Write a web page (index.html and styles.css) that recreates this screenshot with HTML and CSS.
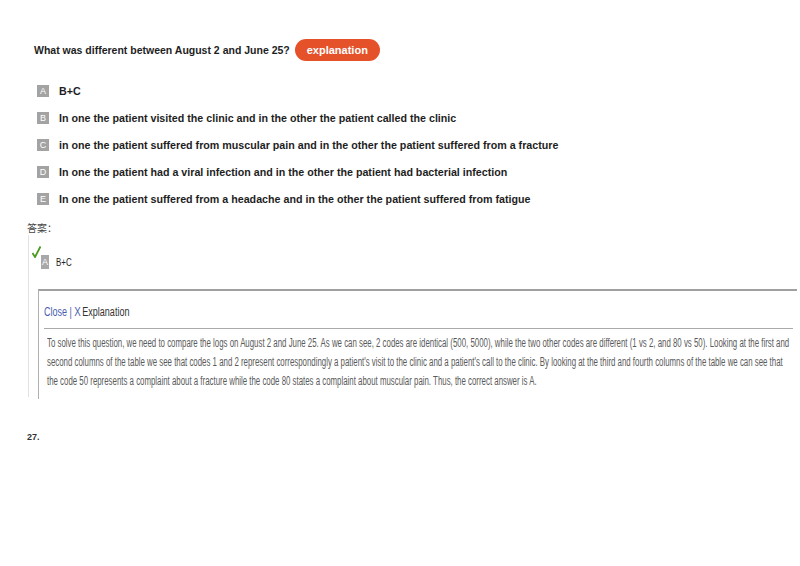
FILE: index.html
```html
<!doctype html>
<html>
<head>
<meta charset="utf-8">
<title>Question</title>
<link rel="stylesheet" href="styles.css">
</head>
<body>

<div class="question">
<span class="question-text">What was different between August 2 and June 25?</span>
<span class="explain-button">explanation</span>
</div>

<div class="options">
<div class="option"><span class="letter">A</span><span class="option-text">B+C</span></div>
<div class="option"><span class="letter">B</span><span class="option-text">In one the patient visited the clinic and in the other the patient called the clinic</span></div>
<div class="option"><span class="letter">C</span><span class="option-text">in one the patient suffered from muscular pain and in the other the patient suffered from a fracture</span></div>
<div class="option"><span class="letter">D</span><span class="option-text">In one the patient had a viral infection and in the other the patient had bacterial infection</span></div>
<div class="option"><span class="letter">E</span><span class="option-text">In one the patient suffered from a headache and in the other the patient suffered from fatigue</span></div>
</div>

<div class="answer-label">答案：</div>

<div class="answer">
<div class="answer-choice">
<svg class="check" width="9" height="12" viewBox="0 0 9 12"><path d="M0.5 7 L3 11 L8.5 0.5" fill="none" stroke="#4a9a1c" stroke-width="1.8"/></svg>
<span class="answer-letter">A</span>
<span class="answer-text">B+C</span>
</div>

<div class="explanation">
<div class="explanation-head">
<span class="head-text"><span class="close-link">Close | <b>X</b></span><span class="explanation-title">Explanation</span></span>
</div>
<div class="explanation-body">
<div class="explanation-inner">
To solve this question, we need to compare the logs on August 2 and June 25. As we can see, 2 codes are identical (500, 5000), while the two other codes are different (1 vs 2, and 80 vs 50). Looking at the first and<br>
second columns of the table we see that codes 1 and 2 represent correspondingly a patient's visit to the clinic and a patient's call to the clinic. By looking at the third and fourth columns of the table we can see that<br>
the code 50 represents a complaint about a fracture while the code 80 states a complaint about muscular pain. Thus, the correct answer is A.
</div>
</div>
</div>
</div>

<div class="number">27.</div>

</body>
</html>
```

FILE: styles.css
```css
body {
	margin: 0;
	padding: 0;
	background: #ffffff;
	font-family: "Liberation Sans", Arial, sans-serif;
	color: #222222;
}

div.question {
	display: flex;
	align-items: center;
	margin-top: 39px;
	padding-left: 34px;
	height: 22px;
}

span.question-text {
	font-weight: bold;
	font-size: 10.5px;
	color: #1e1e1e;
}

span.explain-button {
	margin-left: 5px;
	height: 22px;
	line-height: 22px;
	padding: 0 12px;
	border-radius: 11px;
	background: #e5522a;
	color: #ffffff;
	font-weight: bold;
	font-size: 11px;
}

div.options {
	margin-top: 16px;
}

div.option {
	display: flex;
	align-items: center;
	height: 27px;
	padding-left: 37px;
}

span.letter {
	display: inline-block;
	width: 12px;
	height: 12px;
	line-height: 12px;
	background: #a3a3a3;
	color: #ffffff;
	font-size: 9px;
	text-align: center;
}

span.option-text {
	margin-left: 10px;
	font-weight: bold;
	font-size: 10.7px;
	color: #1e1e1e;
}

div.answer-label {
	margin-top: 9px;
	padding-left: 27px;
	font-family: "Noto Sans CJK SC", sans-serif;
	font-size: 10px;
	color: #444444;
	height: 14px;
	line-height: 14px;
}

div.answer {
	margin-left: 28px;
	border-left: 1px solid #e2e2e2;
	padding-top: 10px;
	height: 152px;
}

div.answer-choice {
	display: flex;
	align-items: flex-end;
	padding-left: 3px;
	height: 24px;
}

svg.check {
	align-self: flex-start;
	margin-top: 1px;
}

span.answer-letter {
	display: inline-block;
	width: 8px;
	height: 14px;
	line-height: 14px;
	background: #a8a8a8;
	color: #ffffff;
	font-size: 9px;
	text-align: center;
}

span.answer-text {
	margin-left: 7px;
	font-size: 11px;
	color: #222222;
	display: inline-block;
	transform: scaleX(0.72);
	transform-origin: left center;
	line-height: 14px;
}

div.explanation {
	margin-top: 20px;
	margin-left: 9px;
	margin-right: 3px;
	border-top: 2px solid #a0a0a0;
	border-left: 1px solid #b0b0b0;
	height: 108px;
	padding-left: 5px;
	padding-right: 4px;
}

div.explanation-head {
	height: 34px;
	padding-top: 3px;
	display: flex;
	align-items: center;
	border-bottom: 1px solid #aaaaaa;
	overflow: hidden;
	white-space: nowrap;
}

span.head-text {
	display: inline-block;
	font-size: 12px;
	transform: scaleX(0.75);
	transform-origin: left center;
}

span.close-link {
	color: #4a5db0;
}

span.close-link b {
	font-weight: normal;
	font-size: 13px;
}

span.explanation-title {
	margin-left: 2px;
	color: #333333;
}

div.explanation-body {
	padding-left: 3px;
	padding-top: 5px;
	overflow: hidden;
}

div.explanation-inner {
	width: 1200px;
	font-size: 12px;
	line-height: 19px;
	color: #5a5a5a;
	white-space: nowrap;
	transform: scaleX(0.655);
	transform-origin: left top;
}

div.number {
	margin-top: 35px;
	padding-left: 27px;
	font-size: 9px;
	font-weight: bold;
	color: #333333;
}
```
